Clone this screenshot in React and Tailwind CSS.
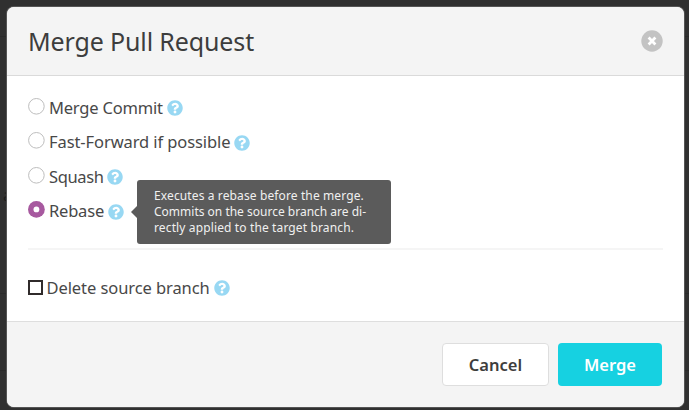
import { FaQuestionCircle } from "react-icons/fa";

function Help() {
  return (
    <span className="relative flex h-4 w-4 shrink-0">
      <span className="absolute inset-[3px] rounded-full bg-white" />
      <FaQuestionCircle className="relative h-4 w-4 text-[#98d8f3]" />
    </span>
  );
}

function Radio({ checked }) {
  return (
    <svg viewBox="0 0 17 17" className="mb-[4px] h-[17px] w-[17px] shrink-0">
      {checked ? (
        <>
          <circle cx="8.4" cy="8.4" r="8.4" fill="#a7599f" />
          <circle cx="8.4" cy="8.4" r="2.9" fill="#fff" />
        </>
      ) : (
        <circle cx="8.4" cy="8.3" r="7.8" fill="#fff" stroke="#bdbdbd" strokeWidth="1" />
      )}
    </svg>
  );
}

function Tooltip() {
  return (
    <div className="absolute -top-[31px] left-[29px] z-10 h-[64px] w-[254px] rounded-[3px] bg-[#5b5b5b] pt-[8px] pl-[17px] text-[12px] leading-[16px] whitespace-nowrap text-[#f0f0f0]">
      <svg viewBox="0 0 6 12" className="absolute top-[26px] -left-[6px] h-3 w-[6px]">
        <path d="M6 0 0 6l6 6z" fill="#5b5b5b" />
      </svg>
      <div className="tracking-[0.12px]">Executes a rebase before the merge.</div>
      <div>Commits on the source branch are di-</div>
      <div className="tracking-[0.13px]">rectly applied to the target branch.</div>
    </div>
  );
}

// Dimmed page content that shows behind the dialog's edges
function Backdrop() {
  return (
    <div className="absolute inset-0 overflow-hidden">
      <div className="absolute top-[36px] h-px w-full bg-[#2a2a2a]" />
      <div className="absolute top-[293px] h-px w-full bg-[#2a2a2a]" />
      <div className="absolute top-[370px] h-px w-full bg-[#2a2a2a]" />
      <span className="absolute top-[183px] left-[3px] text-[16px] leading-6 text-[#1c1c1c]">a</span>
    </div>
  );
}

const options = [
  { label: "Merge Commit", width: "w-[118px]", tracking: "tracking-[-0.2px]" },
  { label: "Fast-Forward if possible", width: "w-[185px]", tracking: "tracking-[-0.09px]" },
  { label: "Squash", width: "w-[58px]", tracking: "tracking-[-0.35px]" },
  { label: "Rebase", width: "w-[59px]", tracking: "tracking-[-0.2px]", checked: true },
];

export default function App() {
  return (
    <div className="relative h-[410px] w-[689px] overflow-hidden bg-[#303030] pt-[7px] pl-[7px] font-['Noto_Sans','Open_Sans',sans-serif] text-[#484848]">
      <Backdrop />
      <div className="relative flex h-[400px] w-[677px] flex-col overflow-hidden rounded-[7px] bg-white shadow-[0_0_0_1px_#555]">
        <header className="flex h-[69px] shrink-0 items-center justify-between border-b border-[#dadada] bg-[#f4f4f4] px-[21px]">
          <h1 className="text-[25px] leading-[30px] tracking-[-0.13px] whitespace-nowrap text-[#3d3d3d]">Merge Pull Request</h1>
          <svg viewBox="0 0 22 22" className="h-[22px] w-[22px]">
            <circle cx="11" cy="11" r="10.7" fill="#c3c3c3" />
            <path d="m7.6 7.6 6.8 6.8m0-6.8-6.8 6.8" stroke="#fff" strokeWidth="2.8" />
          </svg>
        </header>
        <main className="flex h-[245px] shrink-0 flex-col px-[21px] pt-[15px] text-[16.5px]">
          {options.map((o) => (
            <label key={o.label} className="flex h-[34.5px] shrink-0 items-center">
              <Radio checked={o.checked} />
              <span className={`ml-[4px] shrink-0 whitespace-nowrap ${o.width} ${o.tracking}`}>{o.label}</span>
              <div className="relative flex">
                <Help />
                {o.checked && (
                  <div className="absolute top-[7px] left-0">
                    <Tooltip />
                  </div>
                )}
              </div>
            </label>
          ))}
          <div className="mt-[19px] h-[2px] shrink-0 bg-[#f5f5f5]" />
          <label className="mt-[21px] flex h-[34px] shrink-0 items-center">
            <span className="mb-[2px] h-[15px] w-[15px] shrink-0 border-2 border-[#302b2b] bg-white" />
            <span className="ml-[3.5px] w-[167px] shrink-0 tracking-[-0.08px] whitespace-nowrap">Delete source branch</span>
            <Help />
          </label>
        </main>
        <footer className="flex grow items-start justify-end gap-[9px] border-t border-[#dedede] bg-[#f4f4f4] pt-[21px] pr-[22px] text-[16.5px] font-semibold">
          <button className="h-[43px] w-[107px] rounded-[4px] border border-[#dedede] bg-white pt-[1px] text-[#3d3d3d]">Cancel</button>
          <button className="h-[43px] w-[104px] rounded-[4px] bg-[#16d1e1] pt-[1px] text-white">Merge</button>
        </footer>
      </div>
    </div>
  );
}
